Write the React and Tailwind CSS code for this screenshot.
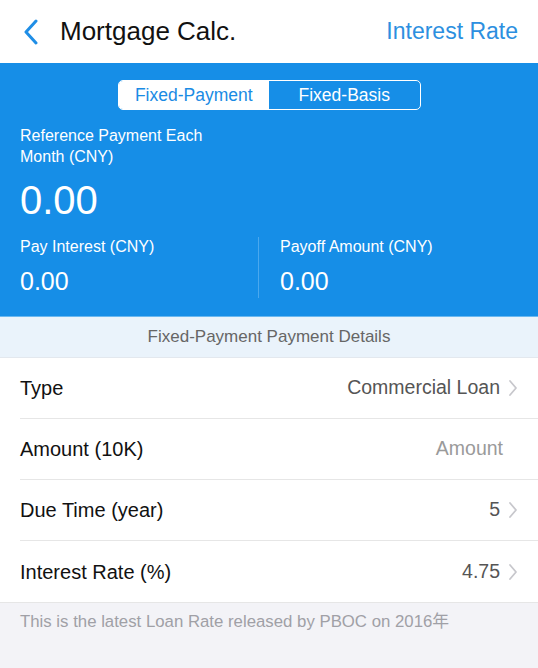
import React from "react";

const Chevron = () => (
  <svg width="10" height="18" viewBox="0 0 10 18" className="ml-[8px]">
    <path d="M2 2 L8 9 L2 16" fill="none" stroke="#c7c7cc" strokeWidth="1.8" strokeLinecap="round" strokeLinejoin="round" />
  </svg>
);

const Row = ({ label, value, chevron = true, placeholder = false, last = false }) => (
  <div className="pl-[20px] bg-white">
    <div className={`h-[61px] flex items-center justify-between pr-[20px] ${last ? "" : "border-b border-[#e6e6e6]"}`}>
      <span className="text-[20px] text-[#111]">{label}</span>
      <span className="flex items-center">
        <span className={`text-[19.5px] ${placeholder ? "text-[#9a9a9a] mr-[15px]" : "text-[#555]"}`}>{value}</span>
        {chevron && <Chevron />}
      </span>
    </div>
  </div>
);

export default function App() {
  return (
    <div className="w-[538px] h-[668px] bg-[#f3f3f7] overflow-hidden" style={{ fontFamily: '"Liberation Sans", "Noto Sans CJK SC", sans-serif' }}>
      <div className="h-[63px] bg-white flex items-center justify-between px-[20px]">
        <div className="flex items-center">
          <svg width="18" height="26" viewBox="0 0 18 26" className="ml-[2px]">
            <path d="M14 2 L4 13 L14 24" fill="none" stroke="#1f8ee6" strokeWidth="3" strokeLinecap="round" strokeLinejoin="round" />
          </svg>
          <span className="ml-[20px] text-[26px] text-[#111]">Mortgage Calc.</span>
        </div>
        <span className="text-[23px] text-[#2c8fe0]">Interest Rate</span>
      </div>
      <div className="bg-[#168ee7] text-white border-b border-[#6ab8f0]">
        <div className="flex justify-center pt-[17px]">
          <div className="flex w-[303px] h-[30px] rounded-[5px] border border-white overflow-hidden">
            <div className="flex-1 bg-white text-[#1a8be4] text-[17.5px] flex items-center justify-center">Fixed-Payment</div>
            <div className="flex-1 text-white text-[17.5px] flex items-center justify-center">Fixed-Basis</div>
          </div>
        </div>
        <div className="px-[20px] pt-[15px] text-[16px] leading-[21px] w-[230px]">Reference Payment Each Month (CNY)</div>
        <div className="px-[20px] mt-[10px] text-[40px] leading-[46px]">0.00</div>
        <div className="flex mt-[14px] pb-[18px]">
          <div className="w-[259px] shrink-0 px-[20px] border-r border-[#4aa8ee] pb-[2px]">
            <div className="text-[16px] leading-[20px]">Pay Interest (CNY)</div>
            <div className="text-[25px] leading-[30px] mt-[9px]">0.00</div>
          </div>
          <div className="flex-1 px-[21px]">
            <div className="text-[16px] leading-[20px]">Payoff Amount (CNY)</div>
            <div className="text-[25px] leading-[30px] mt-[9px]">0.00</div>
          </div>
        </div>
      </div>
      <div className="h-[41px] bg-[#eaf3fb] flex items-center justify-center text-[17px] text-[#666] border-b border-[#e3e8ee]">
        Fixed-Payment Payment Details
      </div>
      <Row label="Type" value="Commercial Loan" />
      <Row label="Amount (10K)" value="Amount" chevron={false} placeholder />
      <Row label="Due Time (year)" value="5" />
      <Row label="Interest Rate (%)" value="4.75" last />
      <div className="border-t border-[#e6e6e6] px-[20px] pt-[6px] text-[16.8px] text-[#a0a0a6]">
        This is the latest Loan Rate released by PBOC on 2016年
      </div>
    </div>
  );
}
